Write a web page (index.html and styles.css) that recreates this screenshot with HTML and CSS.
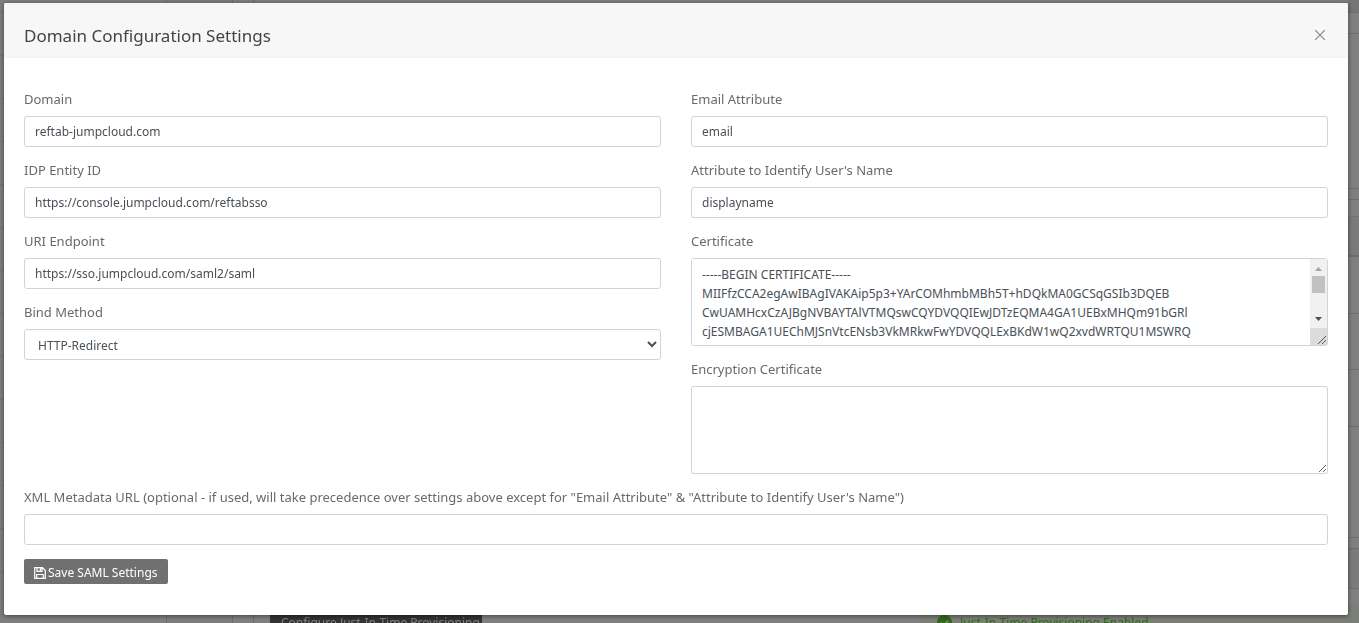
FILE: index.html
```html
<!DOCTYPE html>
<html lang="en">
<head>
<meta charset="utf-8">
<title>Domain Configuration Settings</title>
<link rel="stylesheet" href="styles.css">
</head>
<body>
<div class="backdrop">
  <div class="page-nav"></div>
  <div class="page-subnav"></div>
  <div class="page-gutter"></div>
  <div class="page-footer">
    <div class="page-configure"><span class="page-button">Configure Just-In-Time Provisioning</span></div>
    <div class="page-status">
      <svg class="check" viewBox="0 0 16 16" aria-hidden="true"><circle cx="8" cy="8" r="8" fill="#2f6b16"/><path d="M4 8l3 3 5-5" fill="none" stroke="#7b7f76" stroke-width="2"/></svg>
      <span>Just-In-Time Provisioning Enabled</span>
    </div>
  </div>
  <div class="page-side"></div>
</div>
<main class="modal" role="dialog" aria-labelledby="modal-title">
  <header class="modal-header">
    <h1 class="modal-title" id="modal-title">Domain Configuration Settings</h1>
    <button class="close" type="button" aria-label="Close"><svg viewBox="0 0 10 10"><path d="M0 0L10 10M10 0L0 10" fill="none" stroke="#85888c" stroke-width="1.200"/></svg></button>
  </header>
  <form class="modal-body">
    <div class="columns">
      <div class="column">
        <div class="field"><label for="domain">Domain</label><input class="control" id="domain" type="text" value="reftab-jumpcloud.com"></div>
        <div class="field"><label for="idp">IDP Entity ID</label><input class="control" id="idp" type="text" value="https://console.jumpcloud.com/reftabsso"></div>
        <div class="field"><label for="uri">URI Endpoint</label><input class="control" id="uri" type="text" value="https://sso.jumpcloud.com/saml2/saml"></div>
        <div class="field"><label for="bind">Bind Method</label><select class="control select" id="bind"><option>HTTP-Redirect</option></select></div>
      </div>
      <div class="column">
        <div class="field"><label for="email">Email Attribute</label><input class="control" id="email" type="text" value="email"></div>
        <div class="field"><label for="name">Attribute to Identify User's Name</label><input class="control" id="name" type="text" value="displayname"></div>
        <div class="field"><label for="cert">Certificate</label>
          <div class="area-wrap">
            <textarea class="control area area-scroll" id="cert" spellcheck="false">-----BEGIN CERTIFICATE-----
MIIFfzCCA2egAwIBAgIVAKAip5p3+YArCOMhmbMBh5T+hDQkMA0GCSqGSIb3DQEB
CwUAMHcxCzAJBgNVBAYTAlVTMQswCQYDVQQIEwJDTzEQMA4GA1UEBxMHQm91bGRl
cjESMBAGA1UEChMJSnVtcENsb3VkMRkwFwYDVQQLExBKdW1wQ2xvdWRTQU1MSWRQ</textarea>
            <div class="scrollbar" aria-hidden="true">
              <svg class="arrow" viewBox="0 0 17 17"><path d="M5 12L8.500 8L12 12Z" fill="#a3a3a3"/></svg>
              <div class="thumb"></div>
              <svg class="arrow arrow-down" viewBox="0 0 17 17"><path d="M5 6L8.500 10L12 6Z" fill="#505050"/></svg>
              <svg class="arrow corner" viewBox="0 0 17 17"><path d="M8 16L16 8M12 16L16 12" stroke="#555"/></svg>
            </div>
          </div>
        </div>
        <div class="field"><label for="enc">Encryption Certificate</label><textarea class="control area" id="enc"></textarea></div>
      </div>
    </div>
    <div class="field"><label for="xml">XML Metadata URL (optional - if used, will take precedence over settings above except for "Email Attribute" &amp; "Attribute to Identify User's Name")</label><input class="control" id="xml" type="text"></div>
    <button class="save" type="button"><svg class="save-icon" viewBox="0 0 12 12" aria-hidden="true"><path d="M.7.7H8.500L11.300 3.500V11.300H.7ZM3 .7V4.300H8V.7M2.700 11.300V7.500H9.300V11.300" fill="none" stroke="#fff" stroke-width="1.200"/><path d="M5.700 1h1.600v2.700H5.700z" fill="#fff"/></svg><span>Save SAML Settings</span></button>
  </form>
</main>
</body>
</html>
```
FILE: styles.css
```css
* { box-sizing: border-box; }
body {
  margin: 0;
  font-family: "Noto Sans", "Open Sans", sans-serif;
  font-size: 13px;
  color: #676a6c;
  background: #808080;
}

/* Dimmed page behind the dialog */
.backdrop { position: fixed; inset: 0; overflow: hidden; display: flex; }
.page-nav {
  width: 167px;
  border-right: 1px solid #6e6e6e;
  background: repeating-linear-gradient(#777573 0 1px, #817f7d 1px 43px) 0 12px;
}
.page-subnav { width: 66px; border-right: 1px solid #6e6e6e; background: #7e7e7e; }
.page-gutter { width: 21px; border-right: 1px solid #6e6e6e; }
.page-footer { flex: 1; align-self: flex-end; display: flex; height: 8px; padding-left: 16px; }
.page-configure { width: 650px; }
.page-button {
  display: block;
  width: 212px;
  padding-left: 11px;
  background: #333;
  color: #808080;
  white-space: nowrap;
  font-size: 12px;
  line-height: 15px;
}
.page-status {
  flex: 1;
  display: flex;
  gap: 8px;
  padding-left: 17px;
  background: #7b7f76;
  color: #2f6b16;
  font-size: 12px;
  line-height: 15px;
}
.check { width: 15px; height: 15px; }
.page-side {
  width: 11px;
  background: linear-gradient(
    #757575 0 12px, #6e6e6e 12px 13px, #808080 13px 33px, #6e6e6e 33px 34px,
    #808080 34px 188px, #6e6e6e 188px 189px, #808080 189px 199px, #6e6e6e 199px 200px,
    #808080 200px 216px, #747474 216px 217px, #7b7b7b 217px 255px, #6e6e6e 255px 257px,
    #808080 257px 313px, #6e6e6e 313px 314px, #808080 314px 369px, #6e6e6e 369px 370px,
    #808080 370px 426px, #6e6e6e 426px 427px, #808080 427px 537px, #6e6e6e 537px 538px,
    #808080 538px 548px, #6e6e6e 548px 549px, #7b7b7b 549px 588px, #6e6e6e 588px 589px,
    #808080 589px 605px, #7b7f76 605px);
}

.modal {
  position: relative;
  margin: 3px 11px 8px 4px;
  background: #fff;
  border-radius: 2px;
  box-shadow: 0 1px 5px rgba(0, 0, 0, .5);
}
.modal-header {
  display: flex;
  align-items: center;
  justify-content: space-between;
  height: 55px;
  padding: 10px 23px 0 20px;
  background: #f7f7f7;
  border-bottom: 1px solid #f2f2f2;
  border-radius: 2px 2px 0 0;
}
.modal-title { margin: 0; font-size: 17px; font-weight: 400; line-height: 23px; color: #444; }
.close { padding: 0; border: 0; background: none; line-height: 0; }
.close svg { width: 10px; height: 10px; }
.modal-body { padding: 32px 20px 31px; }
.columns { display: grid; grid-template-columns: 1fr 1fr; gap: 30px; }
.field { margin-bottom: 14px; }
.field label { display: block; margin-bottom: 8px; line-height: 18px; }
.control {
  display: block;
  width: 100%;
  height: 31px;
  padding: 5px 10px;
  border: 1px solid #ced4da;
  border-radius: 3px;
  background: #fff;
  color: #495057;
  font-family: inherit;
  font-size: 12px;
  line-height: 19px;
}
.select { padding: 5px 10px 4px 9px; }
.area { height: 88px; padding: 6px 10px; resize: vertical; }
.area-wrap { position: relative; }
.area-scroll { padding-right: 27px; resize: none; }
.scrollbar {
  position: absolute;
  top: 1px;
  right: 1px;
  bottom: 1px;
  display: flex;
  flex-direction: column;
  width: 17px;
  background: #f1f1f1;
  border-radius: 0 2px 2px 0;
}
.arrow { width: 17px; height: 17px; flex: none; }
.arrow-down { margin-top: auto; }
.corner { background: #dcdcdc; }
.thumb { height: 17px; margin: 0 2px; background: #c1c1c1; }
.save {
  display: flex;
  align-items: center;
  gap: 2px;
  height: 25px;
  padding: 2px 10px 0;
  border: 0;
  border-radius: 2px;
  background: #707070;
  color: #fff;
  font-family: inherit;
  font-size: 12px;
  line-height: 18px;
}
.save-icon { width: 12px; height: 12px; }
```
